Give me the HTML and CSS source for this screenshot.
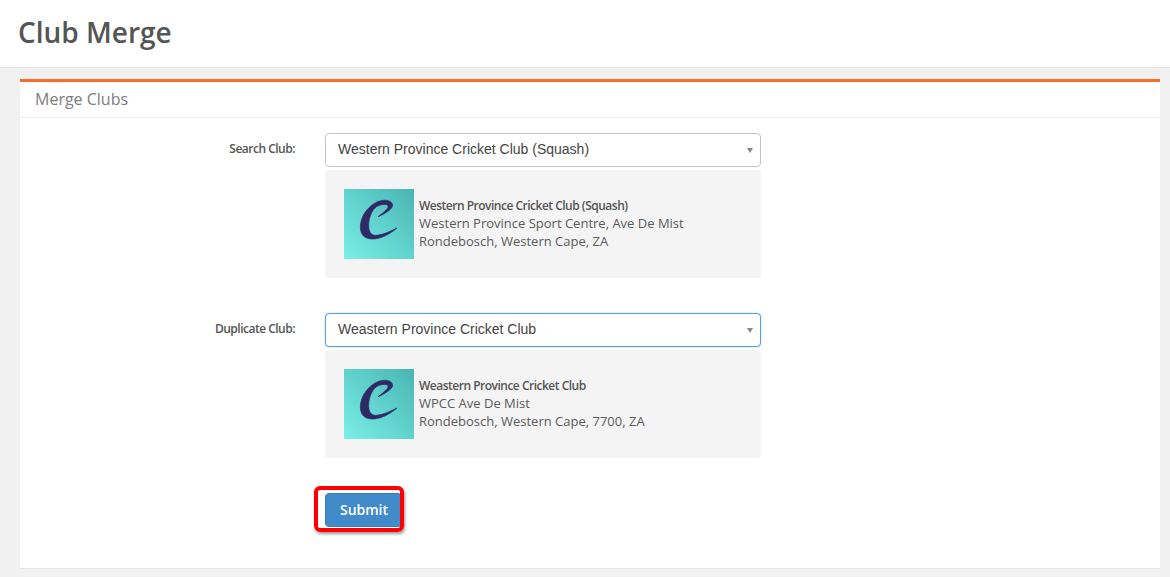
FILE: index.html
```html
<!DOCTYPE html>
<html lang="en">
<head>
<meta charset="utf-8">
<title>Club Merge</title>
<link rel="stylesheet" href="styles.css">
</head>
<body>
<header class="page-header"><h1>Club Merge</h1></header>
<main class="content">
  <section class="panel">
    <h2 class="panel-title">Merge Clubs</h2>
    <form class="panel-body">
      <div class="field">
        <div class="label">Search Club:</div>
        <div class="control">
          <div class="select"><span>Western Province Cricket Club (Squash)</span><i class="caret"></i></div>
          <div class="preview">
            <svg class="logo" viewBox="0 0 70 70"><defs><linearGradient id="g1" x1="0" y1="1" x2="1" y2="0"><stop offset="0" stop-color="#7aefe8"/><stop offset="1" stop-color="#49b5b3"/></linearGradient></defs><rect width="70" height="70" fill="url(#g1)"/><path fill="#2f2a66" stroke="#2f2a66" stroke-width=".7" d="M34 27.7C39 26 45 22 48 18.5C50 15 47 11.5 41.5 11.2C33 11 25 17 20 25C15.5 33 15 42.5 19.5 47C24 51 31 50.5 37 48.5C43 46.5 49 42.5 53 39C47 42 40 45.5 33 46.3C28 46.8 25.5 44 24.8 39C24 32 26.5 24 30.5 19.5C33 16.5 38 15 42 15.5C45 16 44.5 19 42 21C39.5 23.5 37 25.5 34 27.7Z"/></svg>
            <div class="address"><strong>Western Province Cricket Club (Squash)</strong><span>Western Province Sport Centre, Ave De Mist</span><span>Rondebosch, Western Cape, ZA</span></div>
          </div>
        </div>
      </div>
      <div class="field">
        <div class="label">Duplicate Club:</div>
        <div class="control">
          <div class="select focused"><span>Weastern Province Cricket Club</span><i class="caret"></i></div>
          <div class="preview">
            <svg class="logo" viewBox="0 0 70 70"><rect width="70" height="70" fill="url(#g1)"/><path fill="#2f2a66" stroke="#2f2a66" stroke-width=".7" d="M34 27.7C39 26 45 22 48 18.5C50 15 47 11.5 41.5 11.2C33 11 25 17 20 25C15.5 33 15 42.5 19.5 47C24 51 31 50.5 37 48.5C43 46.5 49 42.5 53 39C47 42 40 45.5 33 46.3C28 46.8 25.5 44 24.8 39C24 32 26.5 24 30.5 19.5C33 16.5 38 15 42 15.5C45 16 44.5 19 42 21C39.5 23.5 37 25.5 34 27.7Z"/></svg>
            <div class="address"><strong>Weastern Province Cricket Club</strong><span>WPCC Ave De Mist</span><span>Rondebosch, Western Cape, 7700, ZA</span></div>
          </div>
        </div>
      </div>
      <div class="actions">
        <div class="highlight-wrap">
          <button class="submit" type="button">Submit</button>
          <div class="highlight"></div>
        </div>
      </div>
    </form>
  </section>
</main>
</body>
</html>
```
FILE: styles.css
```css
* { box-sizing: border-box; }
html, body { margin: 0; height: 100%; overflow: hidden; }
body { background: #f1f1f1; font-family: "Open Sans", sans-serif; color: #555; }
.page-header { height: 68px; background: #fff; border-bottom: 1px solid #e2e2e2; padding: 13px 18px 0; }
.page-header h1 { margin: 0; font-size: 28px; line-height: 38px; font-weight: 600; color: #555; }
.content { padding: 11px 10px 0 20px; }
.panel { background: #fff; border-top: 3px solid #f96a2b; border-bottom: 1px solid #e6e6e6; height: 490px; }
.panel-title { margin: 0; height: 36px; padding: 0 15px 1px; font-size: 16px; line-height: 34px; font-weight: 400; color: #7d7d7d; border-bottom: 1px solid #eeeeee; }
.panel-body { padding: 15px 0 0; }
.field { display: flex; margin-bottom: 35px; }
.label { width: 275px; padding-top: 7px; margin-right: 30px; text-align: right; font-size: 12px; line-height: 17px; font-weight: 600; letter-spacing: -0.5px; color: #555; }
.control { width: 436px; }
.select { height: 34px; display: flex; align-items: center; justify-content: space-between; padding: 0 7px 0 12px; border: 1px solid #c4c4c4; border-radius: 4px; background: #fff; font-family: "Liberation Sans", Arial, sans-serif; font-size: 14px; color: #444; }
.select span { padding-bottom: 2px; }
.select.focused { border-color: #5b9dd9; box-shadow: 0 0 2px rgba(91, 157, 217, .5); }
.caret { width: 0; height: 0; border: 3.5px solid transparent; border-top: 5px solid #888; border-bottom: 0; }
.preview { display: flex; align-items: center; gap: 5px; height: 108px; margin-top: 3px; padding: 0 19px; background: #f4f4f4; border-radius: 4px; }
.logo { width: 70px; height: 70px; flex: none; display: block; }
.address { display: flex; flex-direction: column; padding-bottom: 2px; font-size: 13px; line-height: 18px; color: #5a5a5a; }
.address strong { height: 18px; line-height: 20px; font-size: 12px; font-weight: 600; letter-spacing: -0.5px; color: #555; }
.actions { padding-left: 305px; }
.highlight-wrap { position: relative; width: 77px; height: 34px; }
.submit { display: block; width: 77px; height: 34px; border: 1px solid #3a7dbd; border-radius: 4px; background: #428bca; color: #fff; font-family: "Open Sans", sans-serif; font-size: 14px; font-weight: 600; padding: 0 0 2px 1px; }
.highlight { position: absolute; left: -11px; top: -7px; width: 90px; height: 46px; border: 4px solid #f00; border-radius: 6px; box-shadow: 1px 2px 3px rgba(0, 0, 0, .4); }
```
